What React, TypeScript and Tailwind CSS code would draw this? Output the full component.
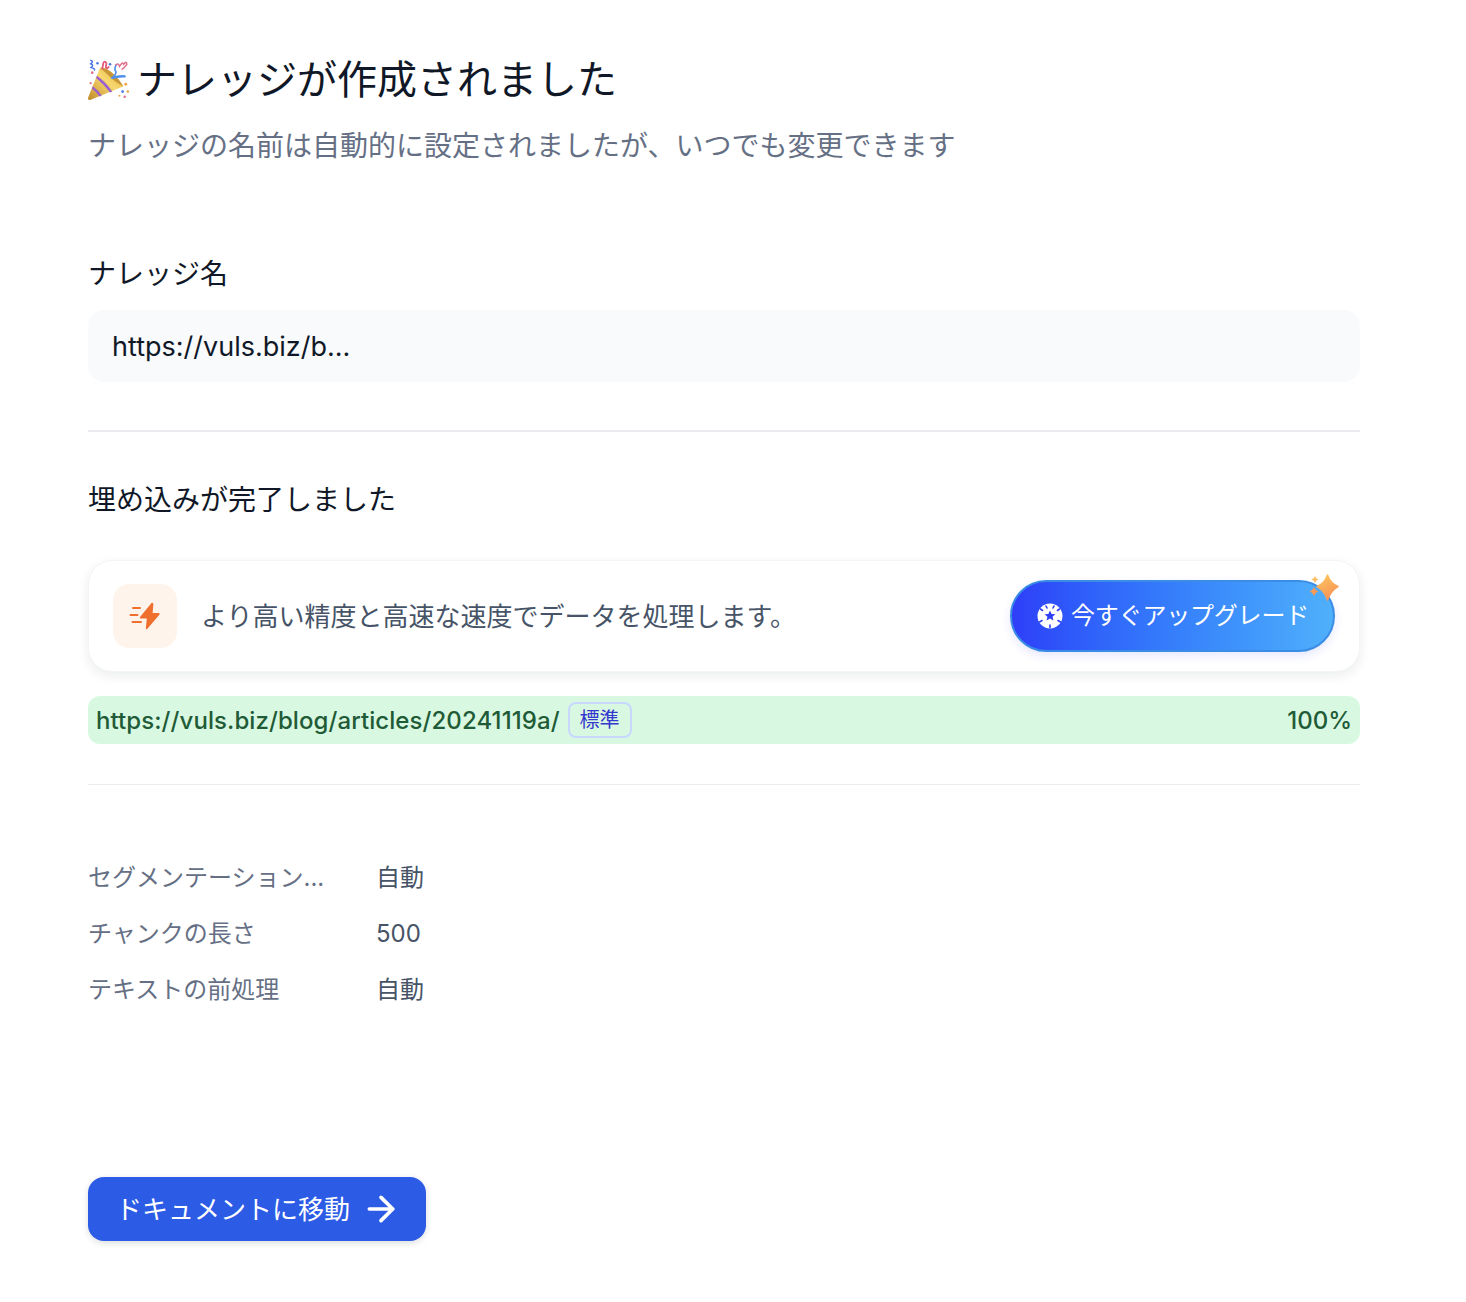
import { ArrowRight } from "lucide-react";

const fontStack = "font-['Inter','Noto_Sans_CJK_JP',sans-serif]";

const settings = [
  { label: "セグメンテーション...", value: "自動" },
  { label: "チャンクの長さ", value: "500" },
  { label: "テキストの前処理", value: "自動" },
];

function PartyPopper() {
  return (
    <svg width="44" height="44" viewBox="0 0 42 42" className="ml-[-1px] shrink-0">
      <defs>
        <linearGradient id="cone" x1="0" y1="1" x2="1" y2="0">
          <stop offset="0" stopColor="#c08a2a" />
          <stop offset="0.55" stopColor="#f7d76e" />
          <stop offset="1" stopColor="#e3b044" />
        </linearGradient>
      </defs>
      <path d="M1 38 Q0.5 40.5 3 40 L35 27 Q30 20 24 14 Q18 9 12.5 9 Z" fill="url(#cone)" />
      <path d="M5.5 27 Q11 31 14 36 L12 36.8 Q8.5 32 4.7 29 Z" fill="#9a5fd0" />
      <path d="M9.5 17 Q18 23 24 32 L22 32.9 Q15.5 24.5 8.7 19 Z" fill="#9a5fd0" />
      <path d="M13 9 Q20 9.5 27 17 Q32 22 34.5 27 Q25 22 20 16 Q15 12 13 9 Z" fill="#b98428" opacity="0.75" />
      <path d="M24 19 Q30 17 36 17.5" fill="none" stroke="#4f8ff0" strokeWidth="2.2" strokeLinecap="round" />
      <path d="M28 6 Q26 10 27 12 Q29 14 25 18" fill="none" stroke="#4f8ff0" strokeWidth="1.6" />
      <path d="M3 2 Q7 3 3.5 5.5 Q7 7 4 9 Q8 10 7 12" fill="none" stroke="#4a74e8" strokeWidth="1.4" />
      <path d="M14.5 11 L15.5 5 Q17 2 18.5 5 L18 9 Q19.5 11 21 8" fill="none" stroke="#e2597a" strokeWidth="1.7" />
      <path d="M27 7 Q30 4 31 8 Q34 3 35 6 Q38 2 38 6 Q36 9 33 11" fill="none" stroke="#e2708c" strokeWidth="1.4" />
      <circle cx="10" cy="5" r="1.2" fill="#4a74e8" />
      <circle cx="22" cy="6" r="1.2" fill="#4a74e8" />
      <circle cx="5" cy="14" r="1.3" fill="#e2708c" />
      <circle cx="3.5" cy="24" r="1.1" fill="#e2708c" />
      <circle cx="37" cy="25" r="1.4" fill="#f0a545" />
      <circle cx="34" cy="32" r="1.3" fill="#4a74e8" />
      <circle cx="39" cy="32" r="1.2" fill="#f0a545" />
      <circle cx="36" cy="37" r="1.2" fill="#e2708c" />
      <circle cx="31" cy="36" r="1" fill="#f0a545" />
    </svg>
  );
}

function BoltIcon() {
  return (
    <svg width="32" height="28" viewBox="0 0 32 28">
      <path
        d="M22.5 1 L11 15 Q10.4 16.6 12 16.6 L17.8 16.6 L16.8 26.5 Q17.4 27.8 18.6 26.6 L30.6 12.6 Q31.2 11 29.6 11 L23.6 11 L24.4 2 Q23.6 0.2 22.5 1 Z"
        fill="#ef6f2e"
      />
      <path d="M4 6 H11 M1.5 13 H8.5 M3.5 20 H12" stroke="#ef6f2e" strokeWidth="2" strokeLinecap="round" />
    </svg>
  );
}

function RocketBadge() {
  return (
    <svg width="26" height="26" viewBox="0 0 26 26" className="shrink-0">
      <circle cx="13" cy="13" r="12.5" fill="#fff" />
      <path
        d="M13 7.5 L14.6 11 L18.4 11.3 L15.6 13.8 L16.4 17.5 L13 15.6 L9.6 17.5 L10.4 13.8 L7.6 11.3 L11.4 11 Z"
        fill="#2f3ff5"
      />
      <path
        d="M13 22 V24.5 M5 17.5 L2.5 19 M21 17.5 L23.5 19 M5.5 7.5 L3.5 6 M20.5 7.5 L22.5 6 M9 3 L10 5 M17 3 L16 5"
        stroke="#2f3ff5"
        strokeWidth="1.6"
        strokeLinecap="round"
      />
    </svg>
  );
}

function Sparkles() {
  return (
    <svg width="30" height="30" viewBox="0 0 30 30" className="absolute right-[-6px] top-[-9px]">
      <defs>
        <linearGradient id="spark" x1="0.3" y1="0" x2="0.7" y2="1">
          <stop offset="0" stopColor="#fdc35c" />
          <stop offset="1" stopColor="#f58f58" />
        </linearGradient>
      </defs>
      <path d="M18.5 2 Q21.5 10.5 29 13.5 Q22 17 18.5 27 Q15 17 8 13.5 Q15.5 10.5 18.5 2 Z" fill="url(#spark)" stroke="url(#spark)" strokeWidth="1.5" strokeLinejoin="round" />
      <path d="M6 3 Q6.8 5.6 9.5 6.5 Q6.8 7.4 6 10 Q5.2 7.4 2.5 6.5 Q5.2 5.6 6 3 Z" fill="#fbbf6a" />
      <path d="M5 14 Q5.8 17 9.5 18.5 Q5.8 19.8 5 23.5 Q4.2 19.8 0.5 18.5 Q4.2 17 5 14 Z" fill="#f79a55" />
    </svg>
  );
}

export default function App() {
  return (
    <div className={`w-[1466px] h-[1302px] bg-white pl-[88px] pr-[106px] pt-[56px] ${fontStack}`}>
      <div className="flex h-[48px] items-center gap-[6px]">
        <PartyPopper />
        <h1 className="text-[40px] leading-[48px] font-normal text-[#101828]">ナレッジが作成されました</h1>
      </div>
      <p className="mt-[22px] text-[28px] leading-[40px] text-[#667085]">
        ナレッジの名前は自動的に設定されましたが、いつでも変更できます
      </p>

      <div className="mt-[88px] text-[28px] leading-[40px] text-[#101828]">ナレッジ名</div>
      <div className="mt-[16px] flex h-[72px] items-center rounded-[16px] bg-[#f9fafb] px-[24px] pt-[3px] text-[27px] text-[#101828]">
        https://vuls.biz/b...
      </div>

      <div className="mt-[48px] h-[2px] bg-[#eaecf0]" />

      <div className="mt-[48px] text-[28px] leading-[40px] text-[#101828]">埋め込みが完了しました</div>

      <div className="mt-[40px] flex h-[112px] items-center rounded-[24px] border border-[#f2f4f7] bg-white pl-[24px] pr-[24px] shadow-[0_4px_12px_rgba(16,24,40,0.08)]">
        <div className="flex h-[64px] w-[64px] items-center justify-center rounded-[16px] bg-[#fef4ec]">
          <BoltIcon />
        </div>
        <span className="ml-[24px] text-[26px] text-[#475467]">より高い精度と高速な速度でデータを処理します。</span>
        <button className="relative ml-auto flex h-[72px] w-[325px] items-center rounded-full border-2 border-[#3a8ce4] bg-gradient-to-r from-[#2f3ef8] to-[#50b0fb] pl-[25px] text-[24px] text-white shadow-[0_4px_10px_rgba(47,62,248,0.12)]">
          <RocketBadge />
          <span className="ml-[8px] tracking-[-0.2px]">今すぐアップグレード</span>
          <Sparkles />
        </button>
      </div>

      <div className="mt-[24px] flex h-[48px] items-center rounded-[12px] bg-[#d9f8e1] px-[8px] text-[#1f5b37]">
        <span className="pt-[2px] text-[24px] font-medium tracking-[0.08px]">https://vuls.biz/blog/articles/20241119a/</span>
        <span className="ml-[8px] flex h-[36px] w-[64px] items-center justify-center rounded-[8px] border-2 border-[#c7d7fe] text-[20px] text-[#3538cd]">
          標準
        </span>
        <span className="ml-auto pt-[2px] text-[24px] font-medium">100%</span>
      </div>

      <div className="mt-[40px] h-px bg-[#eaecf0]" />

      <div className="mt-[65px]">
        {settings.map((item) => (
          <div key={item.label} className="flex h-[56px] items-center text-[24px]">
            <span className="w-[288px] shrink-0 text-[#667085]">{item.label}</span>
            <span className="text-[#475467]">{item.value}</span>
          </div>
        ))}
      </div>

      <button className="mt-[159px] flex h-[64px] w-[338px] items-center rounded-[16px] bg-[#2c5be6] pl-[28px] text-[26px] text-white shadow-[0_2px_6px_rgba(16,24,40,0.15)]">
        ドキュメントに移動
        <ArrowRight className="ml-[11px]" size={40} strokeWidth={2.2} />
      </button>
    </div>
  );
}
